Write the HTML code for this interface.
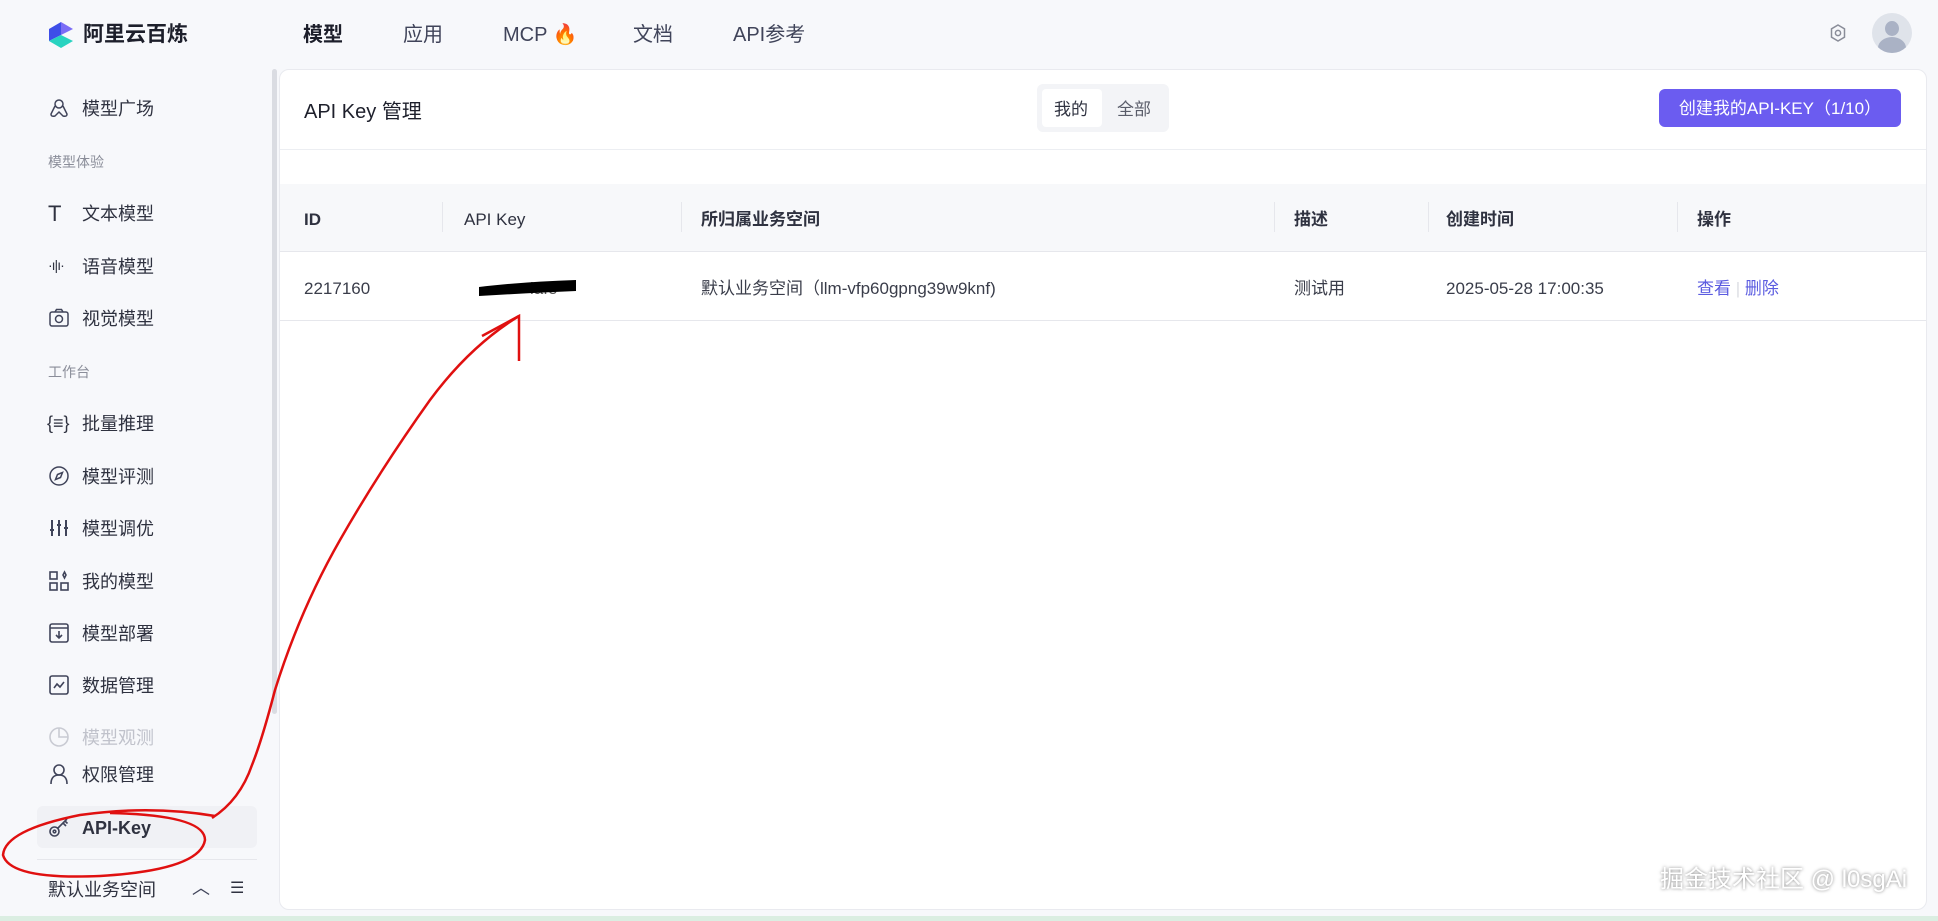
<!DOCTYPE html>
<html><head><meta charset="utf-8"><style>
*{margin:0;padding:0;box-sizing:border-box}
body{width:1938px;height:921px;background:#f7f8fb;font-family:"Liberation Sans","Noto Sans CJK SC",sans-serif;color:#2a2d3a;position:relative;overflow:hidden}
.a{position:absolute;white-space:nowrap;line-height:1.2}
.nav{font-size:20px;color:#40445a;top:23px}
.side{font-size:18px;color:#2f3240;margin-top:2px}
.grp{font-size:14px;color:#8a8d99;margin-top:2px}
.ic{position:absolute;width:22px;height:22px}
.panel{position:absolute;left:279px;top:69px;width:1648px;height:841px;background:#fff;border:1px solid #e9eaef;border-radius:10px}
.th{font-size:17px;font-weight:bold;color:#2f3240;top:210px}
.td{font-size:17px;color:#3a3d4a;top:279px}
.sep{position:absolute;top:202px;width:1px;height:30px;background:#e6e7ec}
</style></head><body>
<svg class="a" style="left:47px;top:21px" width="28" height="28" viewBox="0 0 28 28"><path d="M14 1 L26 8 L14 14 Z" fill="#7b6cf6"/><path d="M2 8 L14 1 L14 14 L2 20Z" fill="#3e4ee8"/><path d="M2 20 L14 14 L26 20 L14 27Z" fill="#28d3c0"/></svg>
<div class="a" style="left:83px;top:22px;font-size:21px;font-weight:bold;color:#1d1f2b">阿里云百炼</div>
<div class="a nav" style="left:303px;font-weight:bold;color:#1d1f2b">模型</div>
<div class="a nav" style="left:403px">应用</div>
<div class="a nav" style="left:503px">MCP <span style="color:#f08a30">🔥</span></div>
<div class="a nav" style="left:633px">文档</div>
<div class="a nav" style="left:733px">API参考</div>
<svg class="a" style="left:1828px;top:23px" width="20" height="20" viewBox="0 0 20 20" fill="none" stroke="#8a8d99" stroke-width="1.5"><path d="M10 2 L16.5 5.8 V14.2 L10 18 L3.5 14.2 V5.8Z"/><circle cx="10" cy="10" r="2.6"/></svg>
<div class="a" style="left:1872px;top:13px;width:40px;height:40px;border-radius:50%;background:#dfe3ea;overflow:hidden"><div style="position:absolute;left:13px;top:8px;width:14px;height:15px;border-radius:50%;background:#aab2c5"></div><div style="position:absolute;left:6px;top:24px;width:28px;height:22px;border-radius:50%;background:#aab2c5"></div></div>
<div class="a" style="left:272px;top:69px;width:5px;height:645px;background:#dadce2;border-radius:3px"></div>
<svg class="ic a" style="left:48px;top:97px" viewBox="0 0 22 22" fill="none" stroke="#40445a" stroke-width="1.5"><circle cx="11" cy="7" r="4"/><path d="M7 9 L3 17 Q3 20 7 19 L11 15 L15 19 Q19 20 19 17 L15 9"/></svg>
<div class="a side" style="left:82px;top:97px">模型广场</div>
<div class="a grp" style="left:48px;top:152px">模型体验</div>
<div class="a side" style="left:48px;top:199px;font-size:22px">T</div>
<div class="a side" style="left:82px;top:202px">文本模型</div>
<div class="a side" style="left:48px;top:255px;font-size:14px;letter-spacing:-1px">·ı|ı·</div>
<div class="a side" style="left:82px;top:255px">语音模型</div>
<svg class="ic a" style="left:48px;top:307px" viewBox="0 0 22 22" fill="none" stroke="#40445a" stroke-width="1.5"><rect x="2" y="5" width="18" height="14" rx="2"/><circle cx="11" cy="12" r="3.5"/><path d="M7 5 L8.5 2.5 H13.5 L15 5"/></svg>
<div class="a side" style="left:82px;top:307px">视觉模型</div>
<div class="a grp" style="left:48px;top:362px">工作台</div>
<div class="a side" style="left:47px;top:411px">{≡}</div>
<div class="a side" style="left:82px;top:412px">批量推理</div>
<svg class="ic a" style="left:48px;top:465px" viewBox="0 0 22 22" fill="none" stroke="#40445a" stroke-width="1.5"><circle cx="11" cy="11" r="9"/><path d="M14.5 7.5 L12.5 12.5 L7.5 14.5 L9.5 9.5Z"/></svg>
<div class="a side" style="left:82px;top:465px">模型评测</div>
<svg class="ic a" style="left:48px;top:517px" viewBox="0 0 22 22" fill="none" stroke="#40445a" stroke-width="2"><path d="M4 3V19M11 3V19M18 3V19"/><path d="M2 13H6M9 8H13M16 11H20"/></svg>
<div class="a side" style="left:82px;top:517px">模型调优</div>
<svg class="ic a" style="left:48px;top:570px" viewBox="0 0 22 22" fill="none" stroke="#40445a" stroke-width="1.6"><rect x="2" y="2" width="7" height="7"/><rect x="2" y="13" width="7" height="7"/><rect x="13" y="13" width="7" height="7"/><path d="M16.5 2 L18 5 L16.5 8 L15 5Z"/></svg>
<div class="a side" style="left:82px;top:570px">我的模型</div>
<svg class="ic a" style="left:48px;top:622px" viewBox="0 0 22 22" fill="none" stroke="#40445a" stroke-width="1.6"><rect x="2" y="2" width="18" height="18" rx="2"/><path d="M2 6H20M11 9V16M8 13L11 16L14 13"/></svg>
<div class="a side" style="left:82px;top:622px">模型部署</div>
<svg class="ic a" style="left:48px;top:674px" viewBox="0 0 22 22" fill="none" stroke="#40445a" stroke-width="1.6"><rect x="2" y="2" width="18" height="18" rx="2"/><path d="M6 14L9 10L12 13L16 8"/></svg>
<div class="a side" style="left:82px;top:674px">数据管理</div>
<svg class="ic a" style="left:48px;top:726px" viewBox="0 0 22 22" fill="none" stroke="#c9cbd3" stroke-width="1.6"><circle cx="11" cy="11" r="9"/><path d="M11 2V11H20"/></svg>
<div class="a side" style="left:82px;top:726px;color:#c0c2cb">模型观测</div>
<svg class="ic a" style="left:48px;top:763px" viewBox="0 0 22 22" fill="none" stroke="#40445a" stroke-width="1.6"><circle cx="11" cy="7" r="5"/><path d="M3 21 Q3 12 11 12 Q19 12 19 21"/></svg>
<div class="a side" style="left:82px;top:763px">权限管理</div>
<div class="a" style="left:37px;top:806px;width:220px;height:42px;background:#f0f1f5;border-radius:6px"></div>
<svg class="ic a" style="left:48px;top:816px" viewBox="0 0 22 22" fill="none" stroke="#40445a" stroke-width="1.6"><circle cx="6.5" cy="15.5" r="4.5"/><circle cx="6.5" cy="15.5" r="1.3"/><path d="M9.5 12.5L19 3M15 7L18 10M17 5L19.5 7.5"/></svg>
<div class="a side" style="left:82px;top:816px;font-weight:bold">API-Key</div>
<div class="a" style="left:37px;top:859px;width:220px;height:1px;background:#e6e7ec"></div>
<div class="a side" style="left:48px;top:878px">默认业务空间</div>
<div class="a side" style="left:192px;top:876px;color:#40445a">︿</div>
<div class="a side" style="left:230px;top:877px;font-size:16px">☰</div>
<div class="a" style="left:0;top:916px;width:1938px;height:5px;background:#dbeee2"></div>
<div class="panel"></div>
<div class="a" style="left:304px;top:100px;font-size:20px;color:#1d1f2b">API Key 管理</div>
<div class="a" style="left:1037px;top:84px;width:132px;height:48px;background:#f3f4f7;border-radius:6px"></div>
<div class="a" style="left:1042px;top:89px;width:60px;height:38px;background:#fff;border-radius:4px"></div>
<div class="a" style="left:1054px;top:100px;font-size:17px;color:#2f3240">我的</div>
<div class="a" style="left:1117px;top:100px;font-size:17px;color:#5a5d6a">全部</div>
<div class="a" style="left:1659px;top:89px;width:242px;height:38px;background:#6b5cf0;border-radius:6px;color:#fff;font-size:17px;text-align:center;line-height:40px">创建我的API-KEY（1/10）</div>
<div class="a" style="left:280px;top:149px;width:1646px;height:1px;background:#eceef2"></div>
<div class="a" style="left:280px;top:184px;width:1646px;height:68px;background:#f7f8fa;border-bottom:1px solid #e6e7ec"></div>
<div class="sep" style="left:442px"></div><div class="sep" style="left:681px"></div><div class="sep" style="left:1274px"></div><div class="sep" style="left:1428px"></div><div class="sep" style="left:1677px"></div>
<div class="a th" style="left:304px">ID</div>
<div class="a th" style="left:464px;font-weight:normal">API Key</div>
<div class="a th" style="left:701px">所归属业务空间</div>
<div class="a th" style="left:1294px">描述</div>
<div class="a th" style="left:1446px">创建时间</div>
<div class="a th" style="left:1697px">操作</div>
<div class="a td" style="left:304px">2217160</div>
<div class="a td" style="left:530px;color:#555">lafe</div>
<div class="a td" style="left:701px">默认业务空间（llm-vfp60gpng39w9knf)</div>
<div class="a td" style="left:1294px">测试用</div>
<div class="a td" style="left:1446px">2025-05-28 17:00:35</div>
<div class="a td" style="left:1697px;color:#5b5ce0">查看 <span style="color:#dcdde3">|</span> 删除</div>
<div class="a" style="left:280px;top:320px;width:1646px;height:1px;background:#e6e7ec"></div>
<div class="a" style="left:1660px;top:866px;font-size:24px;color:#fff;text-shadow:0 0 3px rgba(0,0,0,.5)">掘金技术社区 @ l0sgAi</div>
<svg class="a" style="left:0;top:0" width="1938" height="921">
<path d="M479 287 Q520 282 576 280 L576 291 Q530 293 479 296Z" fill="#000"/>
<g fill="none" stroke="#e01010" stroke-width="2.5">
<path d="M519 361 V316 L482 336"/>
<path d="M519 316 Q470 346 430 400 Q380 470 340 540 Q300 610 275 690 Q262 740 252 765 Q240 800 212 818"/>
<path d="M215 816 Q150 805 80 815 Q5 830 3 855 Q10 880 100 876 Q200 870 205 840 Q205 815 110 813"/>
</g></svg>
</body></html>
